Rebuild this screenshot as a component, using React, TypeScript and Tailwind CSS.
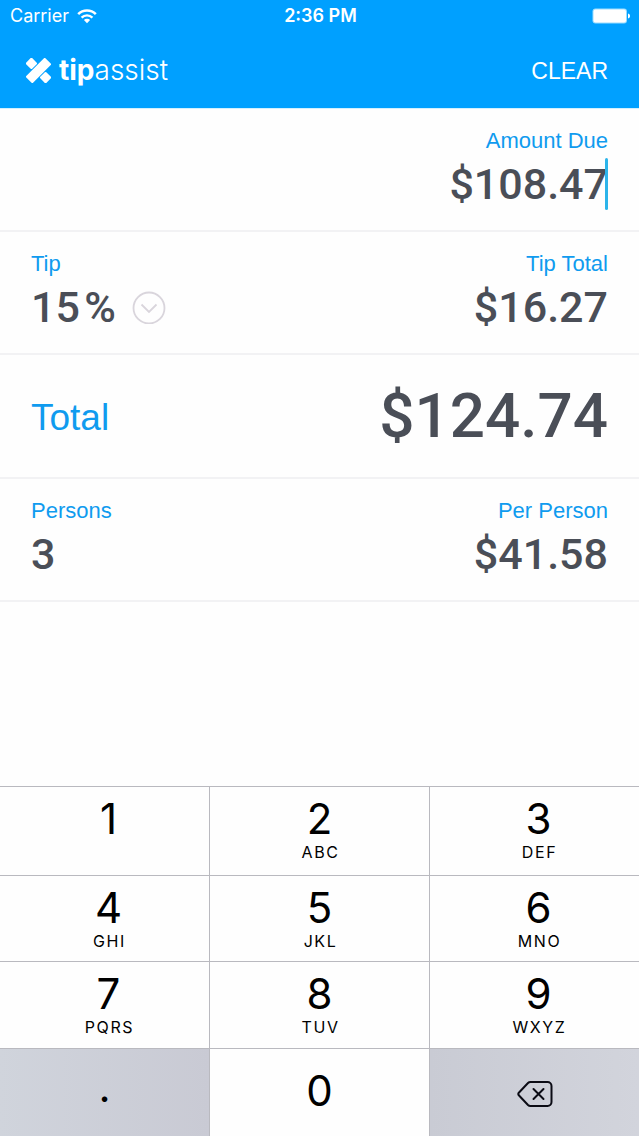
import { useState } from "react";

const KEYS = [
  { digit: "1", letters: "" },
  { digit: "2", letters: "ABC" },
  { digit: "3", letters: "DEF" },
  { digit: "4", letters: "GHI" },
  { digit: "5", letters: "JKL" },
  { digit: "6", letters: "MNO" },
  { digit: "7", letters: "PQRS" },
  { digit: "8", letters: "TUV" },
  { digit: "9", letters: "WXYZ" },
];

const TIPS = [10, 15, 18, 20, 25];

const labelClass =
  "block font-['Liberation_Sans',Arial,sans-serif] text-[22px] leading-[27px] text-[#0f9bef]";
const valueClass =
  "font-[Roboto,sans-serif] text-[43px] leading-[52px] font-medium text-[#4a4e57]";

function formatMoney(value: number) {
  return `$${value.toFixed(2)}`;
}

function StatusBar() {
  return (
    <div className="grid h-8 grid-cols-3 items-center pr-2 pl-[10px] text-lg leading-6">
      <div className="flex items-center gap-2">
        <span>Carrier</span>
        <svg width="20" height="15" viewBox="0 0 20 15" fill="none" aria-hidden="true">
          <path d="M1.2 5.2a12.4 12.4 0 0 1 17.6 0" stroke="currentColor" strokeWidth="2.6" />
          <path d="M4.6 8.6a7.6 7.6 0 0 1 10.8 0" stroke="currentColor" strokeWidth="2.4" />
          <path d="M10 14.2 6.9 11a4.4 4.4 0 0 1 6.2 0z" fill="currentColor" />
        </svg>
      </div>
      <div className="text-center font-semibold">2:36 PM</div>
      <svg
        className="justify-self-end"
        width="39"
        height="16"
        viewBox="0 0 39 16"
        aria-label="Battery full"
      >
        <rect x="0.5" y="0.5" width="34.5" height="15" rx="3" fill="#9bdcff" />
        <rect x="1.5" y="1.5" width="32.5" height="13" rx="2" fill="#fff" />
        <path d="M36 5.5c1.6.5 2 1.5 2 2.5s-.4 2-2 2.5z" fill="#fff" />
      </svg>
    </div>
  );
}

function Logo() {
  return (
    <div className="flex items-center gap-2">
      <svg width="25" height="25" viewBox="0 0 24 24" fill="#fff" aria-hidden="true">
        <rect x="-1" y="7.4" width="26" height="9.2" rx="1" transform="rotate(-45 12 12)" />
        <rect x="1.1" y="1.1" width="8.2" height="8.2" rx="1" transform="rotate(45 5.2 5.2)" />
        <rect x="14.7" y="14.7" width="8.2" height="8.2" rx="1" transform="rotate(45 18.8 18.8)" />
      </svg>
      <h1 className="text-[28px] leading-8 font-light">
        <span className="font-bold">tip</span>assist
      </h1>
    </div>
  );
}

export default function App() {
  const [amount, setAmount] = useState("108.47");
  const [tip, setTip] = useState(15);
  const [persons, setPersons] = useState("3");

  const due = Number(amount) || 0;
  const tipTotal = (due * tip) / 100;
  const total = due + tipTotal;
  const perPerson = total / (Number(persons) || 1);

  const press = (key: string) => {
    if (key === "." && amount.includes(".")) return;
    setAmount(amount + key);
  };

  return (
    <div className="flex min-h-screen flex-col bg-[#fefefe] font-[Inter,sans-serif]">
      <header className="border-b border-[#d2f0ff] bg-[#00a0ff] text-white">
        <StatusBar />
        <div className="flex h-[76px] items-center justify-between pr-[31px] pl-[26px]">
          <Logo />
          <button
            type="button"
            onClick={() => setAmount("")}
            className="pt-0.5 font-['Liberation_Sans',Arial,sans-serif] text-[23px] leading-8"
          >
            CLEAR
          </button>
        </div>
      </header>

      <main>
        <section className="h-[123px] border-b-2 border-[#f2f2f4] px-[31px] pt-[18px] text-right">
          <label htmlFor="amount" className={labelClass}>
            Amount Due
          </label>
          <div className="relative mt-1">
            <input
              id="amount"
              inputMode="decimal"
              value={`$${amount}`}
              onChange={(e) => setAmount(e.target.value.replace(/[^\d.]/g, ""))}
              className={`${valueClass} block h-[52px] w-full text-right caret-transparent outline-none`}
            />
            <span className="absolute top-0 right-0 h-full w-[3px] rounded-sm bg-[#2cb4ea]" />
          </div>
        </section>

        <section className="flex h-[123px] justify-between border-b-2 border-[#f2f2f4] px-[31px] pt-[18px]">
          <div>
            <label htmlFor="tip" className={labelClass}>
              Tip
            </label>
            <div className="mt-1 flex items-center gap-4">
              <select
                id="tip"
                value={tip}
                onChange={(e) => setTip(Number(e.target.value))}
                className={`${valueClass} field-sizing-content h-[52px] appearance-none outline-none`}
              >
                {TIPS.map((value) => (
                  <option key={value} value={value}>
                    {`${value}\u200a%`}
                  </option>
                ))}
              </select>
              <svg
                width="34"
                height="34"
                viewBox="0 0 34 34"
                fill="none"
                stroke="#d9d5dc"
                strokeWidth="1.8"
                aria-hidden="true"
              >
                <circle cx="17" cy="18" r="15.5" />
                <path d="M9.5 14.5 17 22l7.5-7.5" />
              </svg>
            </div>
          </div>
          <div className="text-right">
            <span className={labelClass}>Tip Total</span>
            <output className={`${valueClass} mt-1 block`}>{formatMoney(tipTotal)}</output>
          </div>
        </section>

        <section className="flex h-[124px] items-center justify-between border-b-2 border-[#f2f2f4] px-[31px]">
          <span className="pt-1 font-['Liberation_Sans',Arial,sans-serif] text-[37px] leading-10 text-[#0f9bef]">
            Total
          </span>
          <output className="font-[Roboto,sans-serif] text-[62px] leading-[72px] font-medium text-[#4a4e57]">
            {formatMoney(total)}
          </output>
        </section>

        <section className="flex h-[123px] justify-between border-b-2 border-[#f2f2f4] px-[31px] pt-[18px]">
          <div>
            <label htmlFor="persons" className={labelClass}>
              Persons
            </label>
            <input
              id="persons"
              inputMode="numeric"
              value={persons}
              onChange={(e) => setPersons(e.target.value)}
              className={`${valueClass} mt-1 block h-[52px] w-32 outline-none`}
            />
          </div>
          <div className="text-right">
            <span className={labelClass}>Per Person</span>
            <output className={`${valueClass} mt-1 block`}>{formatMoney(perPerson)}</output>
          </div>
        </section>
      </main>

      {/* Number pad */}
      <div className="mt-auto grid grid-cols-[210fr_220fr_209fr] grid-rows-[89px_86px_87px_88px] text-[42px] leading-[51px] text-black">
        {KEYS.map(({ digit, letters }) => (
          <button
            key={digit}
            type="button"
            onClick={() => press(digit)}
            className="flex flex-col items-center border-t border-r border-[#b9b9bf] pt-[6px] nth-[3n]:border-r-0 nth-[3n]:pl-2 nth-[3n+1]:pl-2"
          >
            <span>{digit}</span>
            <span className="pl-0.5 text-base leading-[17px] tracking-widest">{letters}</span>
          </button>
        ))}
        <button
          type="button"
          onClick={() => press(".")}
          className="border-t border-r border-[#b9b9bf] bg-linear-to-r from-[#d0d4dc] to-[#c9cad4] pb-3"
        >
          .
        </button>
        <button
          type="button"
          onClick={() => press("0")}
          className="border-t border-r border-[#b9b9bf] pb-1"
        >
          0
        </button>
        <button
          type="button"
          aria-label="Delete"
          onClick={() => setAmount(amount.slice(0, -1))}
          className="flex items-center justify-center border-t border-[#b9b9bf] bg-linear-to-r from-[#c9cbd4] to-[#d2d4dc] pt-0.5"
        >
          <svg
            width="36"
            height="28"
            viewBox="0 0 36 28"
            fill="none"
            stroke="#0b0b14"
            strokeWidth="2"
            strokeLinejoin="round"
            strokeLinecap="round"
          >
            <path d="M13.5 2H30.5A4 4 0 0 1 34.5 6V22A4 4 0 0 1 30.5 26H13.5Q12 26 11 25L1.8 15.3Q.8 14 1.8 12.7L11 3Q12 2 13.5 2Z" />
            <path d="m16.5 9 10 10M26.5 9l-10 10" />
          </svg>
        </button>
      </div>
    </div>
  );
}
